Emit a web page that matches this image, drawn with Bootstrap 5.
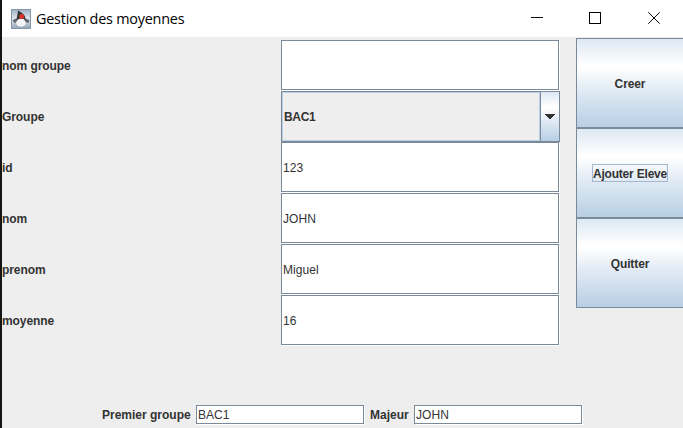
<!DOCTYPE html>
<html lang="fr">
<head>
<meta charset="utf-8">
<meta name="viewport" content="width=device-width, initial-scale=1">
<title>Gestion des moyennes</title>
<link href="https://cdn.jsdelivr.net/npm/bootstrap@5.3.0/dist/css/bootstrap.min.css" rel="stylesheet">
<style>
body{height:428px;background:#eee;color:#333;font:12px/14px "Liberation Sans",Arial,sans-serif}
.app-window{width:683px;height:428px;border-left:2px solid #151515}
.titlebar{height:37px;background:#fff;color:#000;padding-left:9px}
.app-title{font:14.4px/20px "Open Sans","Noto Sans",sans-serif;letter-spacing:-.22px;margin-left:5px;white-space:nowrap}
.caption-btn{width:59px;height:37px;background:none;border:0;padding:0 0 1px}
.caption-btn:first-child{width:58px;padding-left:1px}
.form-area{width:558px;padding-top:3px}
.form-line{height:51px}
.form-line>label{width:279px;font-weight:700;letter-spacing:-.07px}
.metal-field{border:1px solid #7a8a99;border-radius:0;background:#fff;color:#333;font-size:12px;line-height:14px;padding:2px 1px 0;width:278px;height:50px;margin:0 1px 1px 0;box-shadow:1px 1px 0 #fff;outline:0;letter-spacing:.05px}
.metal-field.short{width:168px;height:19px;padding-top:1px}
.metal-combo{width:279px;height:51px;border:1px solid #7a8a99;font-weight:700;background:#eee;padding:0;color:#333}
.combo-value{border:1px solid #b8cfe5;padding-left:1px;letter-spacing:-.3px}
.combo-arrow{width:19px;border-left:1px solid #7a8a99}
.metal-grad{background:linear-gradient(#dde8f3 0%,#fff 30%,#fff 32%,#dde8f3 62%,#b8cfe5 100%)}
.actions{width:107px;margin-left:16px;padding-top:1px}
.btn-metal{width:108px;height:90px;border:1px solid #7a8a99;border-radius:0;font-weight:700;font-size:12px;line-height:14px;color:#333;padding:2px 0 0;letter-spacing:-.1px}
.focus-box{border:1px solid #a3b8cc;padding:2px 0 0;letter-spacing:-.2px}
.results{height:20px;margin:59px 0 0 100px;font-weight:700}
.results label{white-space:nowrap}
.l-first{width:94px}.l-second{width:49px;padding-left:5px}
</style>
<script src="https://cdn.jsdelivr.net/npm/bootstrap@5.3.0/dist/js/bootstrap.bundle.min.js"></script>
</head>
<body class="overflow-hidden">
<div class="app-window overflow-hidden">
  <header class="titlebar d-flex align-items-center">
    <svg width="20" height="20" viewBox="0 0 20 20">
      <defs><linearGradient id="tile" x1="0" y1="0" x2="0" y2="1"><stop offset="0" stop-color="#9fb2c4"/><stop offset=".5" stop-color="#e1e7ec"/><stop offset="1" stop-color="#8fa3b5"/></linearGradient></defs>
      <rect x=".5" y=".5" width="19" height="19" fill="url(#tile)" stroke="#8497a8"/>
      <path d="M1.500 11l4-1.500 1 3.500-3 1zM14 9.500l4.500 1.500-1 3-3-1z" fill="#60676d"/>
      <path d="M7 1.500C10 3 13 5 14 7.500L15 13L12 10.500H9L5 13C5.500 10 6.500 6 7 1.500z" fill="#34383c"/>
      <path d="M5.500 12C7 9.500 9 10 10.500 9.500C12.500 10 13.500 10 14.500 13C15.500 16 13 17.500 10 17.500C7 17.500 4.500 16 5.500 12z" fill="#f4f4f4"/>
      <circle cx="10.700" cy="7.500" r="2.500" fill="#d8322b"/>
    </svg>
    <span class="app-title">Gestion des moyennes</span>
    <div class="d-flex ms-auto">
      <button class="caption-btn" aria-label="Réduire"><svg class="d-block mx-auto" width="12" height="12" shape-rendering="crispEdges"><path d="M0 5.500H12" stroke="#000"/></svg></button>
      <button class="caption-btn" aria-label="Agrandir"><svg class="d-block mx-auto" width="12" height="12" shape-rendering="crispEdges"><path d="M.5.500h11v11H.5z" fill="none" stroke="#000"/></svg></button>
      <button class="caption-btn" aria-label="Fermer"><svg class="d-block mx-auto" width="12" height="12"><path d="M.3.300l11.400 11.400M11.700.300L.3 11.700" stroke="#000"/></svg></button>
    </div>
  </header>
  <main>
    <div class="d-flex align-items-start">
      <form class="form-area">
        <div class="form-line d-flex align-items-center"><label for="ng">nom groupe</label><input id="ng" class="metal-field"></div>
        <div class="form-line d-flex align-items-center"><label>Groupe</label>
          <div class="metal-combo d-flex align-items-stretch">
            <span class="combo-value flex-grow-1 d-flex align-items-center">BAC1</span>
            <span class="combo-arrow metal-grad d-flex align-items-center justify-content-center"><svg width="10" height="5" shape-rendering="crispEdges"><path d="M0 0h10v1H0zM1 1h8v1H1zM2 2h6v1H2zM3 3h4v1H3zM4 4h2v1H4z" fill="#333"/></svg></span>
          </div></div>
        <div class="form-line d-flex align-items-center"><label for="fi">id</label><input id="fi" class="metal-field" value="123"></div>
        <div class="form-line d-flex align-items-center"><label for="fn">nom</label><input id="fn" class="metal-field" value="JOHN"></div>
        <div class="form-line d-flex align-items-center"><label for="fp">prenom</label><input id="fp" class="metal-field" value="Miguel"></div>
        <div class="form-line d-flex align-items-center"><label for="fm">moyenne</label><input id="fm" class="metal-field" value="16"></div>
      </form>
      <div class="actions d-flex flex-column flex-shrink-0">
        <button class="btn btn-metal metal-grad">Creer</button>
        <button class="btn btn-metal metal-grad"><span class="focus-box">Ajouter Eleve</span></button>
        <button class="btn btn-metal metal-grad">Quitter</button>
      </div>
    </div>
    <div class="results d-flex align-items-center">
      <label class="l-first" for="pg">Premier groupe</label><input id="pg" class="metal-field short" value="BAC1">
      <label class="l-second" for="mj">Majeur</label><input id="mj" class="metal-field short" value="JOHN">
    </div>
  </main>
</div>
</body>
</html>
